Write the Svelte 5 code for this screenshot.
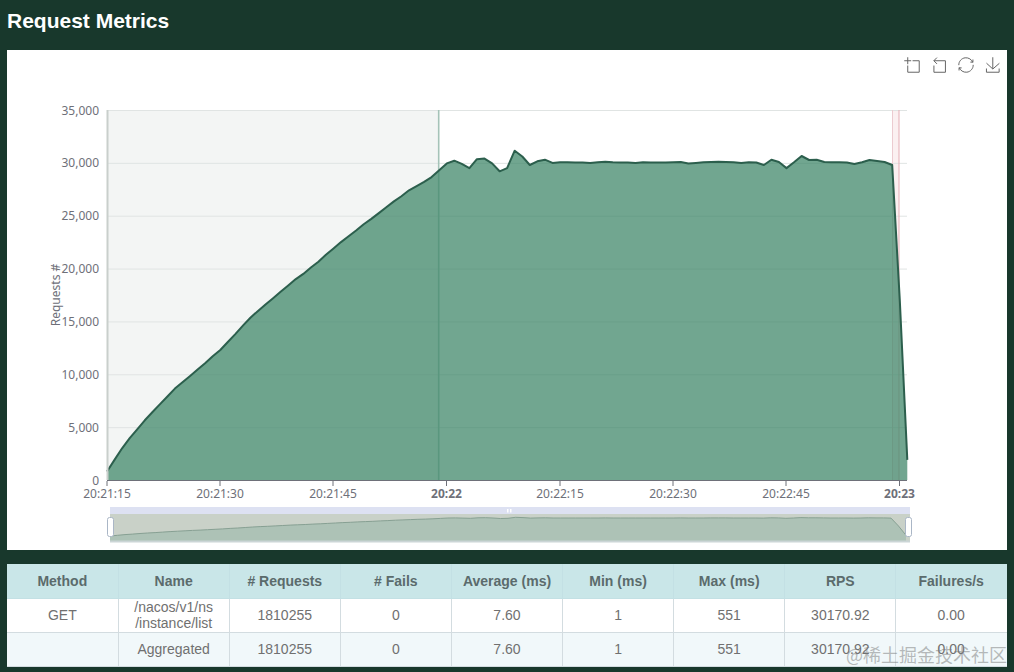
<script lang="ts">
	// requests per second, one value per second from 20:21:15
	const rps = [
		800, 1900, 3000, 3950, 4800, 5650, 6400, 7150, 7900, 8650, 9250, 9850, 10450, 11050, 11700, 12300,
		13050, 13800, 14600, 15350, 16000, 16600, 17200, 17800, 18400, 19000, 19500, 20100, 20650, 21300,
		21900, 22500, 23050, 23600, 24200, 24700, 25250, 25800, 26350, 26850, 27400, 27800, 28200, 28650,
		29300, 29950, 30200, 29900, 29500, 30350, 30400, 29950, 29200, 29500, 31150, 30600, 29800, 30150,
		30300, 30000, 30050, 30050, 30030, 30020, 30000, 30050, 30100, 30050, 30020, 30030, 30000, 30050,
		30040, 30020, 30030, 30060, 30080, 29950, 30000, 30050, 30080, 30100, 30080, 30050, 30000, 30050,
		30030, 29800, 30300, 30080, 29500, 30050, 30650, 30270, 30300, 30080, 30060, 30060, 30040, 29900,
		30050, 30270, 30180, 30080, 29800, 17000, 1900
	];

	const x0 = 107;
	const step = 7.55;
	const yBase = 480;
	const yScale = 370 / 35000;

	const xAt = (i: number) => x0 + i * step;
	const yAt = (v: number) => yBase - v * yScale;

	const points = rps.map((v, i) => `${xAt(i).toFixed(1)},${yAt(v).toFixed(1)}`);
	const linePath = 'M' + points.join('L');
	const lastX = xAt(rps.length - 1).toFixed(1);
	const areaPath = `${linePath}L${lastX},${yBase}L${x0},${yBase}Z`;

	// overview under the chart, same series squeezed into the slider
	const sliderX = (i: number) => 110 + (i / (rps.length - 1)) * 796;
	const sliderY = (v: number) => 536.5 - v * 0.000617;
	const sliderLine = 'M' + rps.map((v, i) => `${sliderX(i).toFixed(1)},${sliderY(v).toFixed(1)}`).join('L');

	const yTicks = [0, 5000, 10000, 15000, 20000, 25000, 30000, 35000];
	const xTicks = [
		{ label: '20:21:15', x: 107 },
		{ label: '20:21:30', x: 220 },
		{ label: '20:21:45', x: 333 },
		{ label: '20:22', x: 446.5, bold: true },
		{ label: '20:22:15', x: 560 },
		{ label: '20:22:30', x: 673 },
		{ label: '20:22:45', x: 786 },
		{ label: '20:23', x: 899.5, bold: true }
	];

	const tools = [
		'M0,13.5h26.9 M13.5,26.9V0 M32.1,13.5H58V58H13.5 V32.1',
		'M22,1.4L9.9,13.5l12.3,12.3 M10.3,13.5H54.9v44.6 H10.3v-26',
		'M47,18.9h9.8V8.7 M56.3,20.1 C52.1,9,40.5,0.6,26.8,2.1C12.6,3.7,1.6,16.2,2.1,30.6 M13,41.1H3.1v10.2 M3.7,39.9c4.2,11.1,15.8,19.5,29.5,18 c14.2-1.6,25.2-14.1,24.7-28.5',
		'M4.7,22.9L29.3,45.5L54.7,23.4M4.6,43.6L4.6,58L53.8,58L53.8,43.6M29.2,45.1L29.2,0'
	];

	const columns = ['Method', 'Name', '# Requests', '# Fails', 'Average (ms)', 'Min (ms)', 'Max (ms)', 'RPS', 'Failures/s'];
	const stats = ['1810255', '0', '7.60', '1', '551', '30170.92', '0.00'];
</script>

<div class="page">
	<h2>Request Metrics</h2>

	<section class="card">
		<div class="toolbox">
			{#each tools as d}
				<svg viewBox="-1 -1 62 62" aria-hidden="true"><path {d} /></svg>
			{/each}
		</div>

		<svg class="chart" viewBox="7 50 1000 500" role="img" aria-label="Requests per second over time">
			<!-- marked ranges -->
			<rect x="107" y="110" width="331.5" height="370" fill="#f3f5f4" />
			<rect x="892" y="110" width="7" height="370" fill="#fbf0f1" />

			{#each yTicks as t}
				<line x1="107" x2="907" y1={yAt(t) + 0.5} y2={yAt(t) + 0.5} stroke="#e0e4e3" />
				<text class="axis" x="99" y={yAt(t) + 4.5} text-anchor="end">{t.toLocaleString('en-US')}</text>
			{/each}

			<line x1="438.7" x2="438.7" y1="110" y2="480" stroke="#a5c3b8" stroke-width="1.6" />
			<line x1="892.5" x2="892.5" y1="110" y2="480" stroke="#eccbd0" />
			<line x1="899" x2="899" y1="110" y2="480" stroke="#e3aeb5" />
			<path d={areaPath} fill="#3f8769" fill-opacity="0.74" />
			<path d={linePath} fill="none" stroke="#2c5f4d" stroke-width="2" stroke-linejoin="round" />

			<line x1="107.5" x2="107.5" y1="110" y2="480" stroke="#c9cfcc" stroke-width="2" />
			<line x1="107" x2="907" y1="480.5" y2="480.5" stroke="#6e7079" />
			{#each xTicks as t}
				<line x1={t.x} x2={t.x} y1="481" y2="486" stroke="#6e7079" />
				<text class="axis" class:bold={t.bold} x={t.x} y="498" text-anchor="middle">{t.label}</text>
			{/each}
			<text class="axis" transform="translate(60 295) rotate(-90)" text-anchor="middle">Requests #</text>

			<!-- data zoom slider -->
			<rect x="110" y="507" width="800" height="35" fill="#dde1f2" />
			<rect x="110" y="514" width="800" height="27" fill="#c9d1c8" />
			<path d="{sliderLine}L906,541L110,541Z" fill="#adc2b6" />
			<path d={sliderLine} fill="none" stroke="#87a093" />
			<rect x="110" y="540.5" width="800" height="2" fill="#cbd5d6" />
			<rect x="507" y="509" width="1.5" height="3.5" fill="#fff" />
			<rect x="510" y="509" width="1.5" height="3.5" fill="#fff" />
			<rect x="107.5" y="517.5" width="6" height="19" rx="2" fill="#fff" stroke="#aab6c6" />
			<rect x="905.5" y="517.5" width="6" height="19" rx="2" fill="#fff" stroke="#aab6c6" />
		</svg>
	</section>

	<table>
		<thead>
			<tr>
				{#each columns as c}<th>{c}</th>{/each}
			</tr>
		</thead>
		<tbody>
			<tr>
				<td>GET</td>
				<td>/nacos/v1/ns<br />/instance/list</td>
				{#each stats as s}<td>{s}</td>{/each}
			</tr>
			<tr>
				<td></td>
				<td>Aggregated</td>
				{#each stats as s}<td>{s}</td>{/each}
			</tr>
		</tbody>
	</table>

	<span class="watermark">@稀土掘金技术社区</span>
</div>

<style>
	:global(body) {
		background: #18382c;
	}
	.page {
		position: relative;
		width: 1014px;
		height: 672px;
		overflow: hidden;
		font-family: 'Liberation Sans', Arial, sans-serif;
	}
	h2 {
		margin: 0;
		height: 50px;
		padding: 9px 7px 0;
		box-sizing: border-box;
		font-size: 21px;
		line-height: 24px;
		color: #fff;
	}
	.card {
		position: relative;
		margin: 0 7px;
		height: 500px;
		background: #fff;
	}
	.chart {
		display: block;
		width: 1000px;
		height: 500px;
	}
	.axis {
		font-family: 'Noto Sans', sans-serif;
		font-size: 12px;
		fill: #6e7079;
	}
	.axis.bold {
		font-weight: 700;
	}
	.toolbox {
		position: absolute;
		top: 7px;
		right: 6px;
		display: flex;
		gap: 11px;
	}
	.toolbox svg {
		width: 16px;
		height: 16px;
		overflow: visible;
	}
	.toolbox path {
		fill: none;
		stroke: #666;
		stroke-width: 1;
		vector-effect: non-scaling-stroke;
	}
	table {
		width: 1000px;
		margin: 14px 7px 0;
		border-collapse: collapse;
		table-layout: fixed;
		font-size: 14px;
		color: #707070;
	}
	th,
	td {
		height: 34px;
		padding: 0;
		box-sizing: border-box;
		text-align: center;
		line-height: 16px;
		font-weight: 400;
		border-right: 1px solid #d3dce0;
		border-bottom: 1px solid #d3dce0;
	}
	th:last-child,
	td:last-child {
		border-right: none;
		padding-right: 1px;
	}
	th {
		font-weight: 700;
		color: #5b6b6c;
		background: #c9e6e8;
		border-color: #c3e0e4;
	}
	tbody tr:nth-child(1) {
		background: #fff;
	}
	tbody tr:nth-child(2) {
		background: #f1f8fa;
	}
	.watermark {
		position: absolute;
		right: 7px;
		top: 642px;
		font-family: 'Noto Sans CJK SC', sans-serif;
		font-size: 18px;
		line-height: 24px;
		color: rgba(120, 120, 120, 0.5);
		white-space: nowrap;
	}
</style>
